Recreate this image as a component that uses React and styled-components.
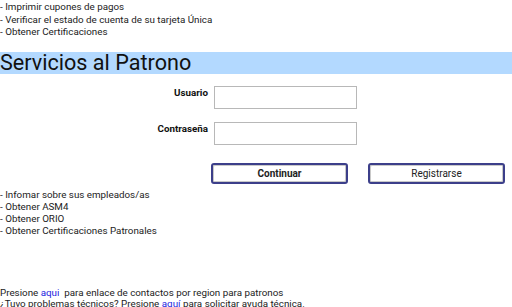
import React from 'react';
import styled, { createGlobalStyle } from 'styled-components';

const GlobalStyle = createGlobalStyle`
  html, body {
    margin: 0;
    padding: 0;
    background: #ffffff;
  }
  body {
    font-family: Roboto, "Liberation Sans", Arial, sans-serif;
    color: #222222;
    font-size: 9.8px;
  }
`;

const Page = styled.div`
  width: 512px;
  height: 307px;
  overflow: hidden;
  display: flex;
  flex-direction: column;
`;

const List = styled.ul`
  list-style: none;
  margin: 0;
  padding: ${(p) => p.pad || 0}px 0 0;
  line-height: ${(p) => p.lh || 12.5}px;
  margin-top: ${(p) => p.top || 0}px;
`;

const Item = styled.li`
  white-space: nowrap;
`;

const Banner = styled.h2`
  margin: 13px 0 0;
  height: 22px;
  line-height: 22px;
  background: #b3d9ff;
  font-weight: 400;
  font-size: 21.6px;
  color: #111;
`;

const Form = styled.div`
  display: grid;
  grid-template-columns: 208px 143px;
  column-gap: 6px;
  row-gap: 13px;
  margin-top: 12px;
  align-items: start;
`;

const Label = styled.label`
  font-weight: 700;
  text-align: right;
  padding-top: 1px;
  color: #111;
`;

const Input = styled.input`
  box-sizing: border-box;
  width: 143px;
  height: 23px;
  margin: 0;
  border: 1px solid #b8b8b8;
  background: #fff;
`;

const Buttons = styled.div`
  display: flex;
  gap: 20px;
  padding-left: 211px;
  margin-top: 18px;
`;

const Button = styled.button`
  box-sizing: border-box;
  width: 137px;
  height: 21px;
  margin: 0;
  padding: 0;
  background: #fff;
  border: 2px solid #3c3f8a;
  border-radius: 3px;
  box-shadow: inset 1px 1px 0 #c9c9c9, inset -1px -1px 0 #c9c9c9;
  font-family: Roboto, "Liberation Sans", Arial, sans-serif;
  font-size: 10px;
  font-weight: ${(p) => (p.primary ? 700 : 400)};
  color: #222;
`;

const Footer = styled.div`
  margin-top: 50px;
  line-height: 11px;
  white-space: nowrap;
`;

const A = styled.a`
  color: #2323e0;
  text-decoration: none;
`;

const App = () => {
  return (
    <Page>
      <GlobalStyle />
      <List pad={1}>
        <Item>- Imprimir cupones de pagos</Item>
        <Item>- Verificar el estado de cuenta de su tarjeta Única</Item>
        <Item>- Obtener Certificaciones</Item>
      </List>
      <Banner>Servicios al Patrono</Banner>
      <Form>
        <Label>Usuario</Label>
        <Input type="text" />
        <Label>Contraseña</Label>
        <Input type="password" />
      </Form>
      <Buttons>
        <Button primary>Continuar</Button>
        <Button>Registrarse</Button>
      </Buttons>
      <List top={5} lh={12}>
        <Item>- Infomar sobre sus empleados/as</Item>
        <Item>- Obtener ASM4</Item>
        <Item>- Obtener ORIO</Item>
        <Item>- Obtener Certificaciones Patronales</Item>
      </List>
      <Footer>
        <div>Presione <A href="#">aqui</A>&nbsp; para enlace de contactos por region para patronos</div>
        <div>¿Tuvo problemas técnicos? Presione <A href="#"><u>aquí</u></A> para solicitar ayuda técnica.</div>
      </Footer>
    </Page>
  );
};

export default App;
